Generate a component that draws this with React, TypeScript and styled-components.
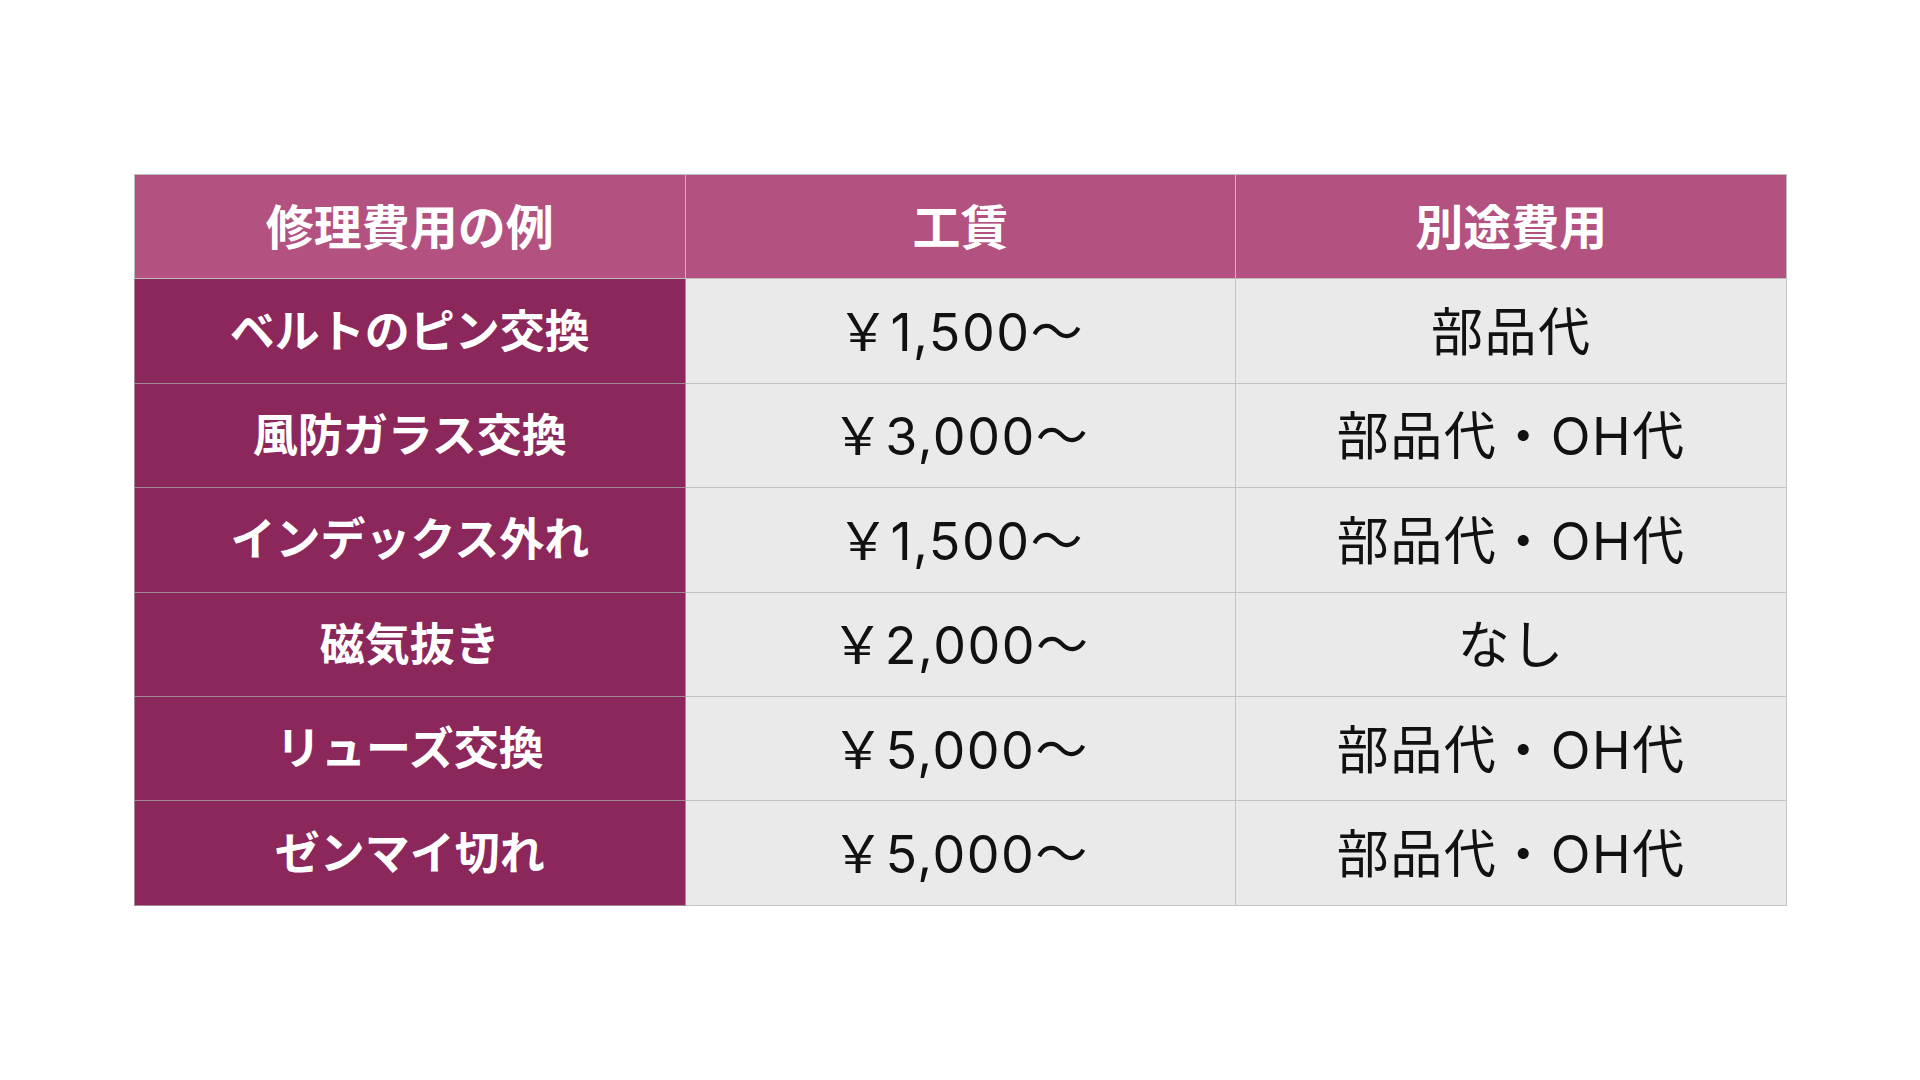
import React from "react";
import styled, { createGlobalStyle } from "styled-components";

const Global = createGlobalStyle`
  html, body {
    margin: 0;
    padding: 0;
    background: #ffffff;
    font-family: "Noto Sans CJK JP", "Noto Sans", sans-serif;
  }
`;

const Page = styled.div`
  width: 1920px;
  height: 1080px;
  box-sizing: border-box;
  padding: 174px 0 0 134px;
`;

const Table = styled.table`
  border-collapse: collapse;
  table-layout: fixed;
  width: 1653px;
`;

const Row = styled.tr`
  height: 104.4px;
`;

const Cell = styled.td`
  border: 1px solid #bdbdbd;
  padding: 0 0 6px 0;
  text-align: center;
  vertical-align: middle;
  line-height: 1;
  white-space: nowrap;
`;

const HeadCell = styled(Cell).attrs({ as: "th" })`
  background: #b35180;
  color: #ffffff;
  font-size: 48px;
  font-weight: 700;
`;

const LabelCell = styled(Cell)`
  background: #8b275b;
  color: #ffffff;
  font-size: 45px;
  font-weight: 700;
  border-color: #a38a97;
`;

const ValueCell = styled(Cell)`
  background: #eaeaea;
  color: #111111;
  font-family: "Inter", "Noto Sans CJK JP", sans-serif;
  font-size: 52px;
  font-weight: 400;
  letter-spacing: 1.5px;
  padding: 4px 0 0 0;
  border-color: #c4c4c4;
`;

const rows: [string, string, string][] = [
  ["ベルトのピン交換", "￥1,500〜", "部品代"],
  ["風防ガラス交換", "￥3,000〜", "部品代・OH代"],
  ["インデックス外れ", "￥1,500〜", "部品代・OH代"],
  ["磁気抜き", "￥2,000〜", "なし"],
  ["リューズ交換", "￥5,000〜", "部品代・OH代"],
  ["ゼンマイ切れ", "￥5,000〜", "部品代・OH代"],
];

export default function App() {
  return (
    <>
      <Global />
      <Page>
        <Table>
          <thead>
            <Row>
              <HeadCell>修理費用の例</HeadCell>
              <HeadCell>工賃</HeadCell>
              <HeadCell>別途費用</HeadCell>
            </Row>
          </thead>
          <tbody>
            {rows.map(([a, b, c]) => (
              <Row key={a}>
                <LabelCell>{a}</LabelCell>
                <ValueCell>{b}</ValueCell>
                <ValueCell>{c}</ValueCell>
              </Row>
            ))}
          </tbody>
        </Table>
      </Page>
    </>
  );
}
